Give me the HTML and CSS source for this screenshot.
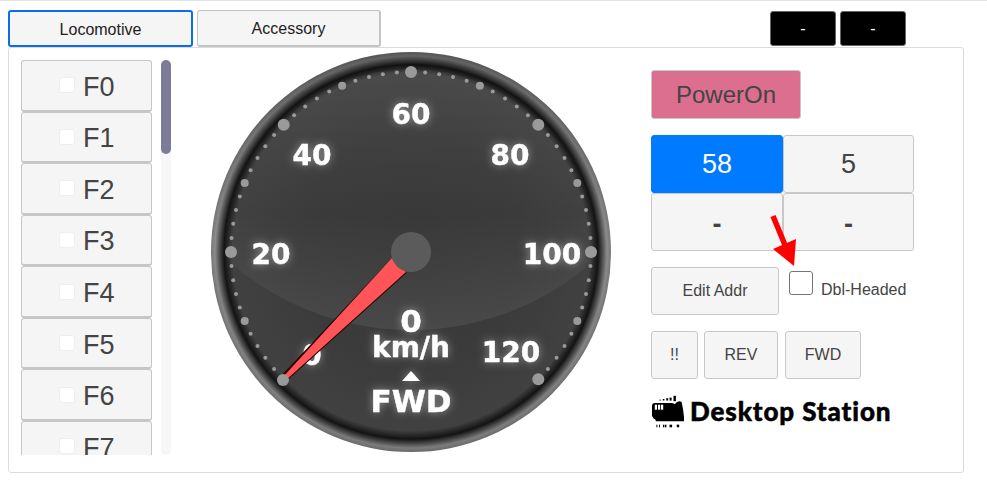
FILE: index.html
```html
<!DOCTYPE html>
<html lang="en">
<head>
<meta charset="utf-8">
<title>Desktop Station</title>
<link rel="stylesheet" href="styles.css">
</head>
<body>
<div class="topbar">
  <div class="tabs">
    <button class="tab tab-active"><span class="tab-text">Locomotive</span></button>
    <button class="tab tab-other"><span class="tab-text">Accessory</span></button>
  </div>
  <div class="status">
    <button class="status-btn">-</button>
    <button class="status-btn">-</button>
  </div>
</div>
<main class="panel">
  <div class="fnwrap">
    <div class="fnlist" id="fnlist"></div>
    <div class="scrolltrack"><div class="scrollthumb"></div></div>
  </div>
  <svg class="gauge" width="400" height="400" viewBox="-200 -200 400 400">
    <defs>
      <radialGradient id="rim" gradientUnits="userSpaceOnUse" cx="0" cy="0" r="200">
        <stop offset="0.935" stop-color="#141414"/>
        <stop offset="0.96" stop-color="#555"/>
        <stop offset="0.98" stop-color="#8c8c8c"/>
        <stop offset="1" stop-color="#787878"/>
      </radialGradient>
      <linearGradient id="rimshade" x1="0" y1="0" x2="0" y2="1">
        <stop offset="0" stop-color="#000" stop-opacity=".3"/>
        <stop offset=".45" stop-color="#000" stop-opacity="0"/>
        <stop offset="1" stop-color="#000" stop-opacity=".12"/>
      </linearGradient>
      <radialGradient id="face" gradientUnits="userSpaceOnUse" cx="0" cy="0" r="187">
        <stop offset="0" stop-color="#383838"/>
        <stop offset="0.6" stop-color="#3b3b3b"/>
        <stop offset="0.955" stop-color="#414141"/>
        <stop offset="1" stop-color="#141414"/>
      </radialGradient>
      <linearGradient id="gloss" gradientUnits="userSpaceOnUse" x1="0" y1="-180" x2="0" y2="78">
        <stop offset="0" stop-color="#fff" stop-opacity=".05"/>
        <stop offset=".55" stop-color="#fff" stop-opacity=".0"/>
        <stop offset="1" stop-color="#fff" stop-opacity=".075"/>
      </linearGradient>
      <clipPath id="faceclip"><circle r="183"/></clipPath>
      <filter id="glow" x="-60%" y="-60%" width="220%" height="220%">
        <feGaussianBlur in="SourceAlpha" stdDeviation="4.5" result="b"/>
        <feFlood flood-color="#fff" flood-opacity=".42"/>
        <feComposite in2="b" operator="in" result="g"/>
        <feMerge><feMergeNode in="g"/><feMergeNode in="SourceGraphic"/></feMerge>
      </filter>
    </defs>
    <circle r="200" fill="url(#rim)"/>
    <circle r="200" fill="url(#rimshade)"/>
    <circle r="187" fill="url(#face)"/>
    <g clip-path="url(#faceclip)"><circle cx="0" cy="-198" r="276" fill="url(#gloss)"/></g>
    <g id="dots"></g>
    <g class="gtext" filter="url(#glow)">
      <text x="-99" y="113" class="gnum">0</text>
      <text x="-140" y="12" class="gnum">20</text>
      <text x="-99" y="-87" class="gnum">40</text>
      <text x="0" y="-128" class="gnum">60</text>
      <text x="99" y="-87" class="gnum">80</text>
      <text x="141" y="12" class="gnum">100</text>
      <text x="100" y="110" class="gnum">120</text>
      <text x="0" y="80" class="gspeed">0</text>
      <text x="0" y="105" class="gunit">km/h</text>
      <polygon points="0,119 9,129 -9,129" fill="#fff"/>
      <text x="0" y="160" class="gdir">FWD</text>
    </g>
    <polygon points="-131,125 -19,6 -126.600,130.400" fill="#2a0707"/>
    <polygon points="-126.600,129.400 -129.400,126.600 -19,6 -5,20" fill="#2a0707" transform="translate(.8,.8)"/>
    <polygon points="-126.600,129.400 -129.400,126.600 -19,6 -5,20" fill="#ff5558"/>
    <circle r="20" fill="#5b5b5b"/>
    <circle cx="-128" cy="128" r="6" fill="#999"/>
  </svg>
  <div class="controls">
    <button class="btn power">PowerOn</button>
    <div class="addr">
      <button class="btn addr-btn addr-on">58</button>
      <button class="btn addr-btn">5</button>
      <button class="btn addr-btn addr-dash">-</button>
      <button class="btn addr-btn addr-dash">-</button>
    </div>
    <div class="editrow">
      <button class="btn edit">Edit Addr</button>
      <label class="dbl"><input type="checkbox" class="dbl-check"><span class="dbl-label">Dbl-Headed</span></label>
      <svg class="arrow" width="30" height="56" viewBox="0 0 30 56"><path d="M3 2 L15 31" stroke="#f00" stroke-width="5.5" fill="none"/><path d="M3 35 L26 25 L24 52 Z" fill="#f00"/></svg>
    </div>
    <div class="dirrow">
      <button class="btn dir dir-stop">!!</button>
      <button class="btn dir dir-rev">REV</button>
      <button class="btn dir dir-fwd">FWD</button>
    </div>
    <div class="logo">
      <svg width="32" height="35" viewBox="0 0 32 35" class="logo-icon">
        <rect x="7.500" y="4.600" width="1.200" height="1"/><rect x="10.800" y="4" width="1.600" height="1.500"/><rect x="14.200" y="3.200" width="2" height="2.300"/><rect x="17.600" y="2.600" width="2" height="3"/><rect x="21.500" y=".8" width="2.400" height="5.400"/>
        <path d="M0 11 Q0 8 3 8 H20 L23 9 Q24.500 6.300 27.500 6.300 Q30 6.300 30 9 L31 14 L32 22 V26.300 H4 L3 24 H2 L0 21 Z"/>
        <rect x="2.800" y="9.700" width="2.200" height="5" fill="#fff"/><rect x="6" y="9.700" width="2.200" height="5" fill="#fff"/><rect x="9" y="9.700" width="2.200" height="5" fill="#fff"/>
        <rect x="4.400" y="29.700" width="1" height="2.600"/><rect x="7" y="29.700" width="1" height="2.600"/><rect x="11" y="29.700" width="1.400" height="2.600"/><rect x="13" y="29.700" width="1.400" height="2.600"/><rect x="17.500" y="29.700" width="2.600" height="2.600"/><circle cx="26" cy="31" r="1.400"/>
      </svg>
      <span class="logo-text">Desktop Station</span>
    </div>
  </div>
</main>
<script>
var list = document.getElementById('fnlist');
for (var i = 0; i < 32; i++) {
  var b = document.createElement('button');
  b.className = 'fn';
  b.innerHTML = '<span class="fn-check"></span><span class="fn-label">F' + i + '</span>';
  list.appendChild(b);
}
var dots = '';
for (var k = 1; k <= 60; k++) {
  var a = (225 - k * 4.5) * Math.PI / 180;
  var r = k % 10 === 0 ? 6 : (k % 5 === 0 ? 4 : 2);
  dots += '<circle cx="' + (180 * Math.cos(a)).toFixed(2) + '" cy="' + (-180 * Math.sin(a)).toFixed(2) + '" r="' + r + '" fill="#9a9a9a"/>';
}
document.getElementById('dots').innerHTML = dots;
</script>
</body>
</html>
```

FILE: styles.css
```css
* { box-sizing: border-box; }
html, body { margin: 0; padding: 0; }
body {
  width: 987px;
  height: 492px;
  overflow: hidden;
  background: #fff;
  border-top: 1px solid #e2e2e2;
  font-family: "Liberation Sans", Arial, sans-serif;
  color: #444;
}
button { font-family: inherit; cursor: pointer; }
.topbar {
  display: flex;
  justify-content: space-between;
  height: 46px;
  padding: 9px 81px 0 8px;
}
.tabs { display: flex; gap: 4px; height: 37px; }
.tab {
  width: 185px;
  background: #f5f5f5;
  font-size: 16px;
  color: #222;
  border-radius: 3px;
  padding: 2px 0 0;
}
.tab-active { border: 2px solid #0a6cf5; }
.tab-other { width: 184px; border: 1px solid #c4c4c4; border-width: 1px 2px 2px 1px; }
.status { display: flex; gap: 4px; padding-top: 1px; height: 36px; }
.status-btn {
  width: 66px;
  height: 35px;
  background: #000;
  color: #fff;
  border: 1px solid #666;
  border-radius: 3px;
  font-size: 16px;
  padding: 0;
}
.panel {
  display: flex;
  width: 956px;
  height: 426px;
  margin-left: 8px;
  border: 1px solid #dcdcdc;
  border-radius: 3px;
}
.fnwrap {
  flex: none;
  display: flex;
  gap: 9px;
  width: 150px;
  height: 395px;
  margin: 12px 0 0 12px;
}
.fnlist {
  flex: none;
  width: 131px;
  height: 395px;
  overflow: hidden;
  display: flex;
  flex-direction: column;
}
.scrolltrack {
  flex: none;
  width: 10px;
  height: 395px;
  background: #f7f7f7;
  border-radius: 5px;
}
.scrollthumb {
  width: 10px;
  height: 94px;
  background: #7c7c98;
  border-radius: 5px;
}
.fn {
  flex: none;
  display: flex;
  align-items: center;
  justify-content: flex-start;
  width: 131px;
  height: 51.57px;
  padding: 0 0 0 37px;
  background: #f5f5f5;
  border: 1px solid #c6c6c6;
  border-bottom-width: 2px;
  border-radius: 3px;
  font-size: 27px;
  color: #444;
}
.fn-check {
  width: 16px;
  height: 16px;
  margin-right: 8px;
  background: #fff;
  border: 1px solid #eee;
  border-radius: 3px;
}
.fn-label { padding-top: 4px; }
.gauge { flex: none; margin: 4px 0 0 40px; }
.controls {
  flex: none;
  width: 300px;
  margin-left: 40px;
  padding-top: 22px;
  display: flex;
  flex-direction: column;
  align-items: flex-start;
}
.btn {
  background: #f5f5f5;
  border: 1px solid #c8c8c8;
  border-radius: 3px;
  color: #444;
  font-size: 16px;
  padding: 0;
}
.power {
  width: 150px;
  height: 49px;
  background: #dc6e90;
  font-size: 24px;
}
.addr {
  display: grid;
  grid-template-columns: 132px 131px;
  grid-template-rows: 58px 58px;
  margin-top: 16px;
}
.addr-btn { font-size: 27px; }
.addr-on { background: #007bff; border-color: #007bff; color: #fff; }
.addr-dash { padding-top: 4px; font-weight: 700; }
.editrow {
  position: relative;
  display: flex;
  margin-top: 16px;
  height: 48px;
}
.edit { width: 128px; height: 48px; }
.dbl { display: flex; align-items: flex-start; margin-left: 10px; padding-top: 4px; }
.dbl-check {
  appearance: none;
  width: 24px;
  height: 24px;
  margin: 0;
  background: #fff;
  border: 1px solid #767676;
  border-radius: 3px;
}
.dbl-label { margin: 10px 0 0 8px; font-size: 16px; color: #444; }
.arrow { position: absolute; left: 119px; top: -53px; }
.dirrow { display: flex; gap: 6px; margin-top: 16px; }
.dir { height: 48px; }
.dir-stop { width: 47px; }
.dir-rev { width: 74px; }
.dir-fwd { width: 76px; margin-left: 1px; }
.logo {
  display: flex;
  align-items: center;
  gap: 7px;
  margin-top: 16px;
  height: 35px;
  color: #000;
}
.logo-icon { flex: none; margin-left: 1px; }
.logo-text {
  font-family: "Lato", sans-serif;
  font-weight: 900;
  font-size: 26px;
  letter-spacing: 0.9px;
  white-space: nowrap;
  margin-bottom: 4px;
  margin-left: -1px;
  -webkit-text-stroke: 0.5px #000;
}
.gtext text {
  font-family: "DejaVu Sans", sans-serif;
  font-weight: 700;
  fill: #fff;
  stroke: #fff;
  stroke-width: 0.4px;
  text-anchor: middle;
}
.gnum { font-size: 28px; }
.gspeed { font-size: 31px; }
.gunit { font-size: 28px; }
.gdir { font-size: 31px; }
```
